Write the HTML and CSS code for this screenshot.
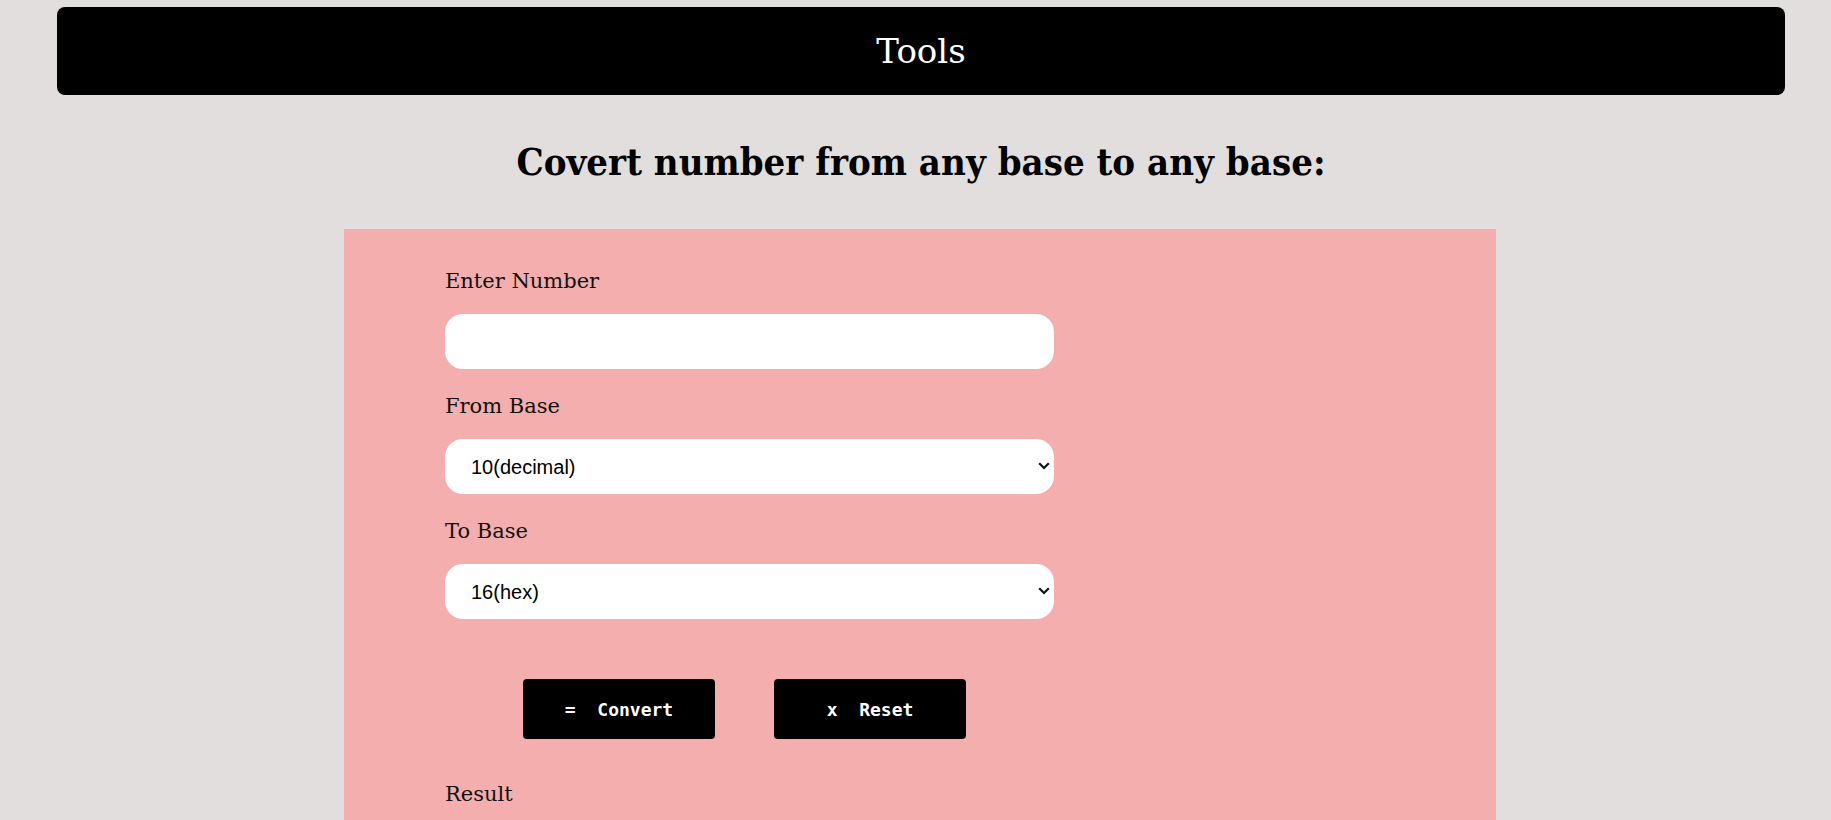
FILE: index.html
```html
<!DOCTYPE html>
<html lang="en">
<head>
<meta charset="utf-8">
<title>Tools</title>
<link rel="stylesheet" href="styles.css">
</head>
<body>
<div class="page">
  <header class="topbar">Tools</header>
  <h1 class="title">Covert number from any base to any base:</h1>
  <main class="panel">
    <form class="converter">
      <label class="field-label" for="num">Enter Number</label>
      <input class="field" id="num" type="text">
      <label class="field-label" for="from">From Base</label>
      <div class="select-wrap">
        <select class="field field-select" id="from">
          <option>10(decimal)</option>
        </select>
        <svg class="chevron" width="12" height="8" viewBox="0 0 12 8" aria-hidden="true"><path d="M1.2 1.3 L6 6 L10.8 1.3" fill="none" stroke="#111" stroke-width="2.2"/></svg>
      </div>
      <label class="field-label" for="to">To Base</label>
      <div class="select-wrap">
        <select class="field field-select" id="to">
          <option>16(hex)</option>
        </select>
        <svg class="chevron" width="12" height="8" viewBox="0 0 12 8" aria-hidden="true"><path d="M1.2 1.3 L6 6 L10.8 1.3" fill="none" stroke="#111" stroke-width="2.2"/></svg>
      </div>
      <div class="actions">
        <button type="button" class="btn">=  Convert</button>
        <button type="reset" class="btn">x  Reset</button>
      </div>
      <label class="field-label result-label">Result</label>
    </form>
  </main>
</div>
</body>
</html>
```

FILE: styles.css
```css
html, body {
  margin: 0;
  padding: 0;
  background: #e3dede;
  overflow: hidden;
}

.page {
  padding: 7px 46px 0 57px;
}

.topbar {
  height: 88px;
  background: #000;
  border-radius: 8px;
  color: #fff;
  display: flex;
  align-items: center;
  justify-content: center;
  font-family: "DejaVu Serif", serif;
  font-size: 34px;
  line-height: 1;
}

.title {
  margin: 42px 0 0;
  text-align: center;
  font-family: "DejaVu Serif Condensed", "DejaVu Serif", serif;
  font-stretch: condensed;
  font-weight: bold;
  font-size: 38px;
  line-height: 50px;
  color: #000;
}

.panel {
  margin: 42px 0 0 287px;
  width: 1152px;
  min-height: 700px;
  background: #f4aeae;
  box-sizing: border-box;
  padding: 40px 0 0 101px;
}

.converter {
  width: 609px;
  display: flex;
  flex-direction: column;
  align-items: flex-start;
}

.field-label {
  font-family: "DejaVu Serif", serif;
  font-size: 21px;
  line-height: 24px;
  color: #111;
  margin-bottom: 21px;
}

.field {
  display: block;
  width: 609px;
  height: 55px;
  box-sizing: border-box;
  border: none;
  border-radius: 18px;
  background: #fff;
  margin: 0 0 25px;
  font-family: "Liberation Sans", Arial, sans-serif;
  font-size: 20px;
  color: #000;
  padding: 0 6px 0 24px;
  outline: none;
}

.select-wrap {
  position: relative;
  width: 609px;
}

.field-select {
  -webkit-appearance: none;
  appearance: none;
  padding: 0 30px 0 26px;
}

.chevron {
  position: absolute;
  right: 4px;
  top: 23px;
  pointer-events: none;
}

.actions {
  display: flex;
  gap: 59px;
  margin: 35px 0 43px 78px;
}

.btn {
  width: 192px;
  height: 60px;
  background: #000;
  color: #fff;
  border: none;
  border-radius: 4px;
  font-family: "DejaVu Sans Mono", monospace;
  font-weight: bold;
  font-size: 18px;
  white-space: pre;
  padding: 0;
  cursor: pointer;
}

.result-label {
  margin-bottom: 0;
}
```
